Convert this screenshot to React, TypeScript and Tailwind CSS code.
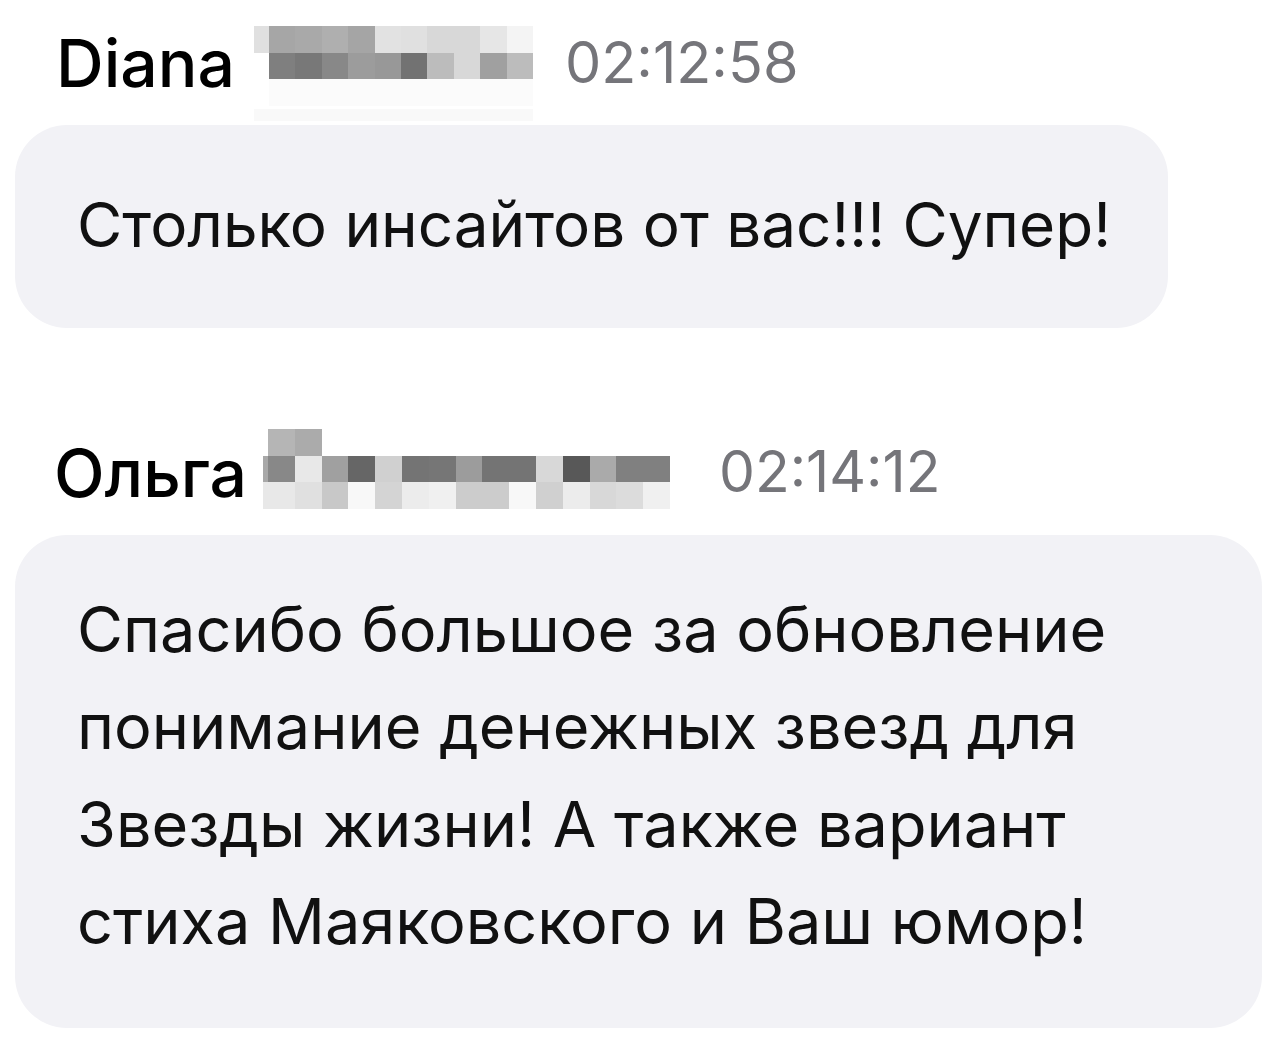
import React from "react";

type Cell = { w: number; c: string };

const blur1: Cell[][] = [
  [
    { w: 15, c: "#e0e0e0" },
    { w: 26.4, c: "#a6a6a6" },
    { w: 26.4, c: "#a9a9a9" },
    { w: 26.4, c: "#afafaf" },
    { w: 26.4, c: "#a5a5a5" },
    { w: 26.4, c: "#e2e2e2" },
    { w: 26.4, c: "#e0e0e0" },
    { w: 26.4, c: "#d8d8d8" },
    { w: 26.4, c: "#d8d8d8" },
    { w: 26.4, c: "#e6e6e6" },
    { w: 26.4, c: "#f4f4f4" },
  ],
  [
    { w: 15, c: "#ffffff" },
    { w: 26.4, c: "#7f7f7f" },
    { w: 26.4, c: "#787878" },
    { w: 26.4, c: "#888888" },
    { w: 26.4, c: "#9c9c9c" },
    { w: 26.4, c: "#989898" },
    { w: 26.4, c: "#727272" },
    { w: 26.4, c: "#bcbcbc" },
    { w: 26.4, c: "#d8d8d8" },
    { w: 26.4, c: "#a0a0a0" },
    { w: 26.4, c: "#bcbcbc" },
  ],
  [
    { w: 15, c: "#ffffff" },
    { w: 264, c: "#fbfbfb" },
  ],
];

const blur2Top = ["#b5b5b5", "#ababab"];
const blur2Mid = ["#888888", "#e8e8e8", "#a0a0a0", "#666666", "#d0d0d0", "#747474", "#767676", "#9c9c9c", "#747474", "#747474", "#d8d8d8", "#585858", "#aaaaaa", "#808080", "#808080"];
const blur2Bot = ["#e8e8e8", "#e0e0e0", "#c8c8c8", "#f8f8f8", "#d4d4d4", "#ececec", "#f0f0f0", "#cccccc", "#cccccc", "#f8f8f8", "#d0d0d0", "#ececec", "#d8d8d8", "#dcdcdc", "#f0f0f0"];

function Blur1() {
  return (
    <div className="mt-[26px] flex flex-col">
      {blur1.map((row, i) => (
        <div key={i} className="flex h-[26.5px]">
          {row.map((cell, j) => (
            <div key={j} style={{ width: cell.w, background: cell.c }} />
          ))}
        </div>
      ))}
      <div className="mt-[3px] h-[12px] w-[279px] bg-[#f9f9f9]" />
    </div>
  );
}

function Blur2() {
  return (
    <div className="mt-[101px] flex flex-col">
      <div className="flex h-[26.7px] pl-[5px]">
        {blur2Top.map((c, j) => (
          <div key={j} style={{ width: 26.8, background: c }} />
        ))}
      </div>
      <div className="flex h-[26.7px]">
        <div className="w-[5px] bg-[#a8a8a8]" />
        {blur2Mid.map((c, j) => (
          <div key={j} style={{ width: 26.8, background: c }} />
        ))}
      </div>
      <div className="flex h-[26.7px]">
        <div className="w-[5px] bg-[#e8e8e8]" />
        {blur2Bot.map((c, j) => (
          <div key={j} style={{ width: 26.8, background: c }} />
        ))}
      </div>
    </div>
  );
}

export default function App() {
  return (
    <div className="h-[1047px] w-[1280px] overflow-hidden bg-white font-['Inter','Noto_Sans',sans-serif] text-[#111111]">
      {/* Header 1 */}
      <div className="flex h-[125px] items-start">
        <div className="ml-[56px] mt-[30px] w-[198px] text-[66px] font-medium leading-[66px] text-black">Diana</div>
        <Blur1 />
        <div className="ml-[32px] mt-[34px] text-[57.5px] leading-[57px] text-[#75757a]">02:12:58</div>
      </div>

      {/* Bubble 1 */}
      <div className="ml-[15px] h-[203px] w-[1153px] rounded-[52px] bg-[#f2f2f6] pl-[62px] pt-[51px] text-[62px] leading-[97px]">
        Столько инсайтов от вас!!! Супер!
      </div>

      {/* Header 2 */}
      <div className="flex h-[207px] items-start">
        <div className="ml-[54px] mt-[112px] w-[209px] text-[66px] font-medium leading-[66px] text-black">Ольга</div>
        <Blur2 />
        <div className="ml-[49px] mt-[115px] text-[57px] leading-[57px] text-[#75757a]">02:14:12</div>
      </div>

      {/* Bubble 2 */}
      <div className="ml-[15px] h-[493px] w-[1247px] rounded-[52px] bg-[#f2f2f6] pl-[62px] pt-[46px] text-[63px] leading-[97.3px]">
        <div>Спасибо большое за обновление</div>
        <div>понимание денежных звезд для</div>
        <div>Звезды жизни! А также вариант</div>
        <div>стиха Маяковского и Ваш юмор!</div>
      </div>
    </div>
  );
}
